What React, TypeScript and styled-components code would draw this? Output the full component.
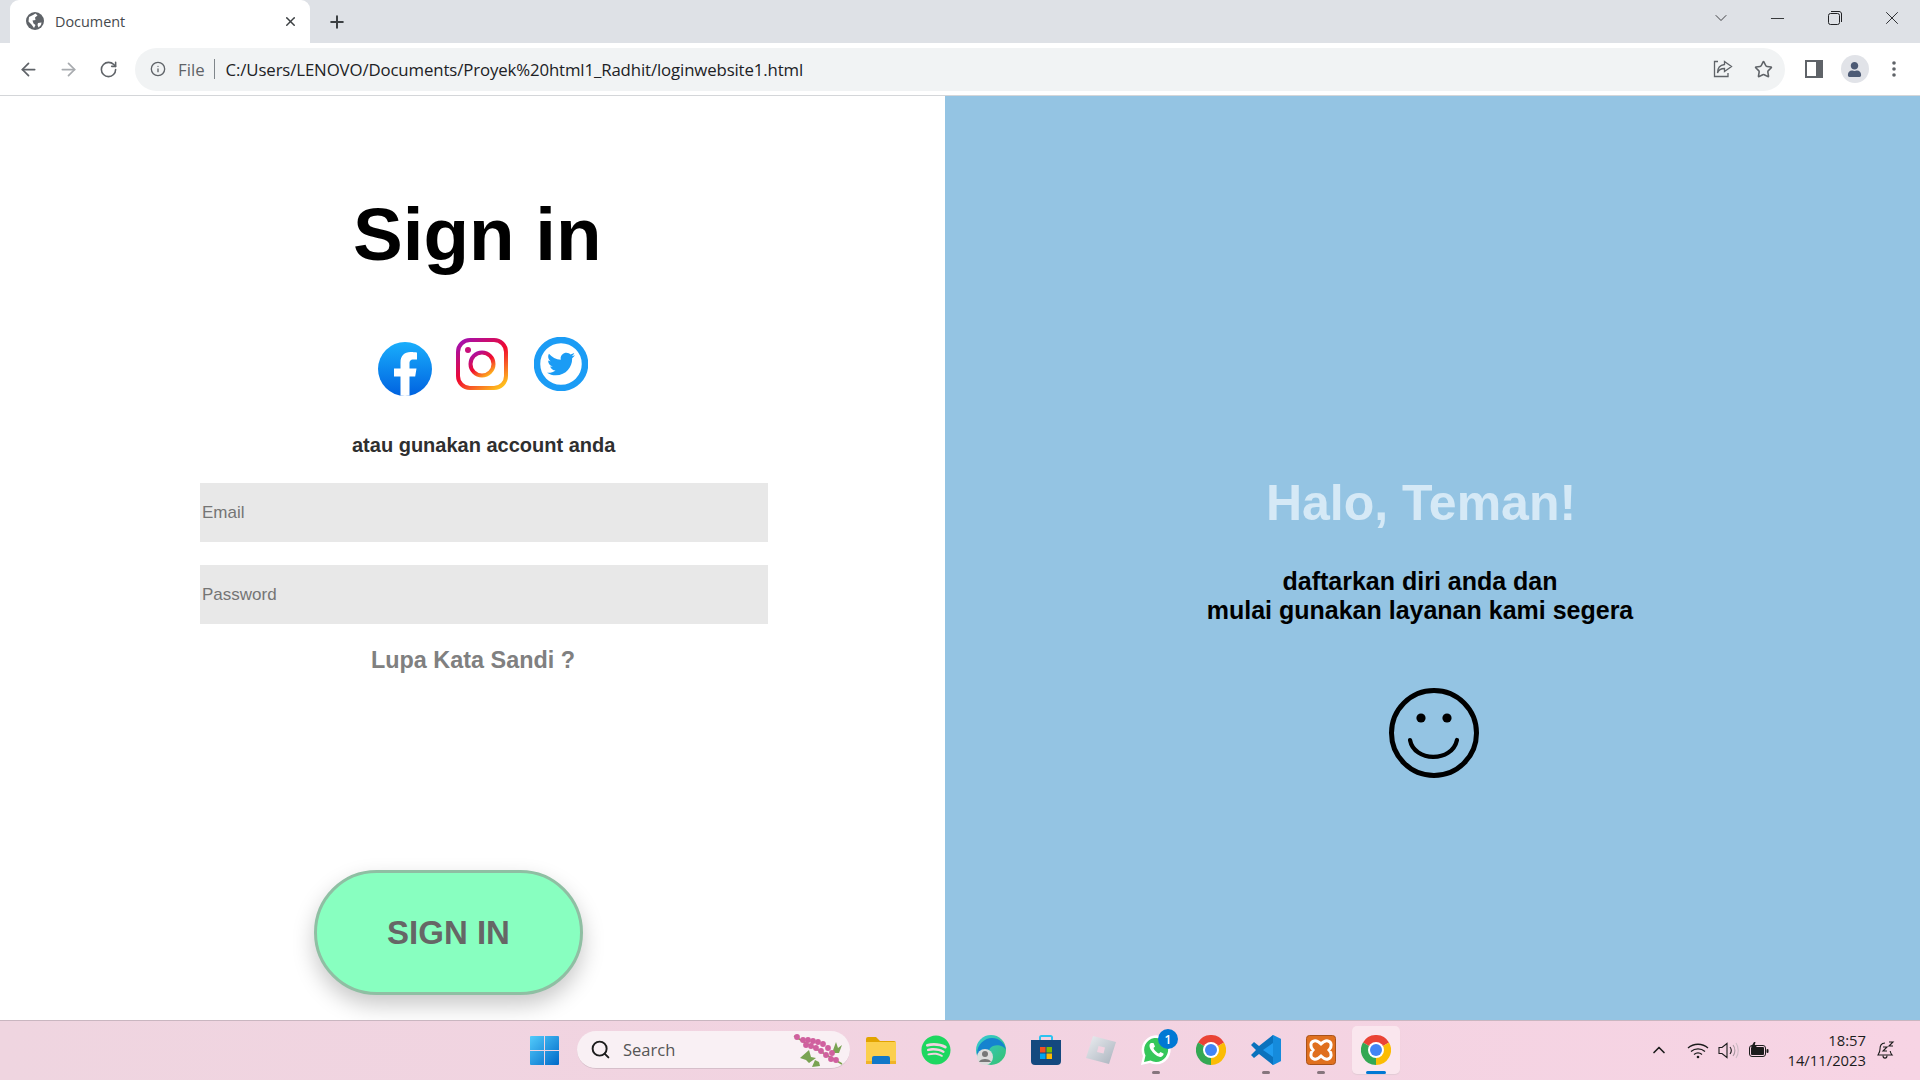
import React from "react";
import styled, { createGlobalStyle } from "styled-components";
import { ArrowLeft, ArrowRight, RotateCw, Info, Star, X, Plus, ChevronDown, ChevronUp, Minus, Search } from "lucide-react";
import { FaSpotify, FaTwitter, FaUser } from "react-icons/fa";

const GlobalStyle = createGlobalStyle`
    html, body {
        margin: 0;
        width: 1920px;
        height: 1080px;
        overflow: hidden;
        background: #fff;
        font-family: "Liberation Sans", Arial, sans-serif;
    }
    * { box-sizing: border-box; }
`;

const Screen = styled.div`
    width: 1920px;
    height: 1080px;
    display: flex;
    flex-direction: column;
`;

/* browser chrome */
const TabStrip = styled.div`
    height: 43px;
    background: #dee1e6;
    display: flex;
    align-items: flex-end;
    padding-left: 10px;
    color: #3c4043;
`;
const Tab = styled.div`
    width: 300px;
    height: 43px;
    background: #fff;
    border-radius: 9px 9px 0 0;
    display: flex;
    align-items: center;
    padding: 0 12px 1px 16px;
    font-family: "Open Sans", sans-serif;
    font-size: 14.4px;
    color: #45494d;
`;
const TabTitle = styled.span`
    margin-left: 11px;
    flex: 1;
`;
const NewTab = styled.div`
    margin: 0 0 11px 17px;
    display: flex;
    height: 20px;
`;
const WindowButtons = styled.div`
    margin-left: auto;
    align-self: flex-start;
    display: flex;
    color: #202124;
`;
const WindowButton = styled.div`
    width: 57px;
    height: 36px;
    display: flex;
    align-items: center;
    justify-content: center;
`;
const Toolbar = styled.div`
    height: 53px;
    background: #fff;
    border-bottom: 1px solid #d4d6d9;
    display: flex;
    align-items: center;
    padding: 0 7px 0 8px;
    color: #5f6368;
`;
const NavButton = styled.div<{ $w?: number; $dim?: boolean }>`
    width: ${(p) => p.$w ?? 40}px;
    flex: none;
    display: flex;
    justify-content: center;
    color: ${(p) => (p.$dim ? "#a8abaf" : "#5f6368")};
`;
const Omnibox = styled.div`
    width: 1650px;
    flex: none;
    height: 43px;
    margin: 0 8px 0 7px;
    background: #f1f3f4;
    border-radius: 22px;
    display: flex;
    align-items: center;
    padding: 0 2px 0 15px;
    font-family: "Open Sans", sans-serif;
    font-size: 16.8px;
`;
const FileLabel = styled.span`
    color: #5f6368;
    margin-left: 12px;
`;
const Divider = styled.span`
    width: 1px;
    height: 20px;
    background: #80868b;
    margin: 0 11px 0 9px;
`;
const Url = styled.span`
    color: #202124;
    flex: 1;
    white-space: nowrap;
    letter-spacing: -0.12px;
`;
const OmniIcon = styled.div`
    width: 40px;
    display: flex;
    justify-content: center;
`;
const Avatar = styled.div`
    width: 28px;
    height: 28px;
    border-radius: 50%;
    background: #e1e3e8;
    color: #4d5b75;
    display: flex;
    align-items: center;
    justify-content: center;
`;

/* page */
const Page = styled.main`
    height: 924px;
    display: flex;
`;
const LeftPanel = styled.section`
    width: 945px;
    background: #fff;
    display: flex;
    flex-direction: column;
    padding-top: 96px;
`;
const Title = styled.h1`
    margin: 0 0 0 353px;
    font-size: 74.6px;
    line-height: 85px;
    font-weight: 700;
    color: #000;
    white-space: nowrap;
`;
const SocialRow = styled.div`
    display: flex;
    align-items: flex-start;
    margin: 60px 0 0 378px;
    height: 58px;
`;
const SocialIcon = styled.a<{ $top: number; $right: number }>`
    display: block;
    margin-top: ${(p) => p.$top}px;
    margin-right: ${(p) => p.$right}px;
    line-height: 0;
`;
const Hint = styled.p`
    margin: 39px 0 0 352px;
    font-size: 20px;
    line-height: 23px;
    font-weight: 700;
    color: #2f2f2f;
    white-space: nowrap;
`;
const Field = styled.input`
    display: block;
    width: 568px;
    height: 59px;
    margin: 0 0 0 200px;
    padding: 0 2px;
    border: none;
    outline: none;
    background: #e8e8e8;
    font-family: "Liberation Sans", Arial, sans-serif;
    font-size: 17px;
    &::placeholder { color: #757575; opacity: 1; }
`;
const EmailField = styled(Field)`
    margin-top: 26px;
`;
const PasswordField = styled(Field)`
    margin-top: 23px;
`;
const Forgot = styled.a`
    margin: 23px 0 0 371px;
    font-size: 23.4px;
    line-height: 27px;
    font-weight: 700;
    color: #808080;
    white-space: nowrap;
`;
const SignInButton = styled.button`
    width: 269px;
    height: 125px;
    margin: 196px 0 0 314px;
    border: 3px solid #8fbfa3;
    border-radius: 63px;
    background: #88ffc0;
    box-shadow: 0 10px 22px rgba(0, 0, 0, 0.22);
    font-family: "Liberation Sans", Arial, sans-serif;
    font-size: 33px;
    font-weight: 700;
    color: #666;
`;
const RightPanel = styled.section`
    flex: 1;
    background: #94c4e3;
    display: flex;
    flex-direction: column;
    align-items: center;
    padding-top: 377px;
`;
const Hello = styled.h2`
    margin: 0 23px 0 0;
    font-size: 50px;
    line-height: 60px;
    font-weight: 700;
    color: #d5e9f6;
`;
const Lead = styled.p`
    margin: 34px 25px 0 0;
    font-size: 25px;
    line-height: 29px;
    font-weight: 700;
    text-align: center;
    color: #000;
`;
const SmileWrap = styled.div`
    margin: 63px 0 0 2px;
    line-height: 0;
`;

/* taskbar */
const Taskbar = styled.footer`
    height: 60px;
    border-top: 1px solid #c9b6c0;
    background: linear-gradient(90deg, #efd5e0, #f2d3e1 50%, #f7d4e4);
    display: flex;
    align-items: center;
    padding: 0 0 1px 530px;
`;
const StartIcon = styled.div`
    line-height: 0;
    margin-right: 18px;
`;
const SearchPill = styled.div`
    width: 273px;
    height: 38px;
    border-radius: 19px;
    background: #f9f0f4;
    border-bottom: 1px solid #d6bfca;
    display: flex;
    align-items: center;
    padding: 0 6px 0 13px;
    color: #1c1c1c;
    font-family: "Open Sans", sans-serif;
    font-size: 16.5px;
`;
const SearchLabel = styled.span`
    margin-left: 12px;
    flex: 1;
    color: #555;
`;
const AppButton = styled.div<{ $active?: boolean; $dot?: boolean }>`
    position: relative;
    width: 48px;
    height: 48px;
    margin-left: 7px;
    border-radius: 5px;
    display: flex;
    align-items: center;
    justify-content: center;
    background: ${(p) => (p.$active ? "#fae6ee" : "transparent")};
    box-shadow: ${(p) => (p.$active ? "0 1px 1px #e3cbd6" : "none")};
    &::after {
        content: ${(p) => (p.$active || p.$dot ? '""' : "none")};
        position: absolute;
        bottom: 0;
        left: 50%;
        transform: translateX(-50%);
        width: ${(p) => (p.$active ? 20 : 8)}px;
        height: 3px;
        border-radius: 2px;
        background: ${(p) => (p.$active ? "#0078d4" : "#86757d")};
    }
`;
const Badge = styled.span`
    position: absolute;
    top: 3px;
    right: 2px;
    width: 20px;
    height: 20px;
    border-radius: 50%;
    background: #0078d4;
    color: #fff;
    font-family: "Open Sans", sans-serif;
    font-size: 12px;
    font-weight: 600;
    display: flex;
    align-items: center;
    justify-content: center;
`;
const Tray = styled.div`
    margin-left: auto;
    display: flex;
    align-items: center;
    padding-right: 24px;
    color: #1c1c1c;
`;
const TrayIcon = styled.div<{ $w: number }>`
    width: ${(p) => p.$w}px;
    display: flex;
    justify-content: center;
    line-height: 0;
`;
const Clock = styled.div`
    margin-left: 10px;
    margin-right: 10px;
    text-align: right;
    font-family: "Open Sans", sans-serif;
    font-size: 14.8px;
    line-height: 20px;
    color: #1c1c1c;
`;

const FaviconGlobe = () => (
    <svg width="18" height="18" viewBox="0 0 18 18">
        <circle cx="9" cy="9" r="9" fill="#5f6368" />
        <path d="M3 5L7 3L9.5 1.5L11.5 3.5L9 5.5L9.5 8L6.5 8.5L7.5 11.5L9.5 13L8 16L5.5 12.5L2.5 9.5ZM12 11L15.5 10.5L15 13L12.5 15.5L11.5 13Z" fill="#fff" />
    </svg>
);

const ChromeLogo = () => (
    <svg width="30" height="30" viewBox="0 0 30 30">
        <path d="M15 15 L2 7.5 A15 15 0 0 1 28 7.5 Z" fill="#ea4335" />
        <path d="M15 15 L28 7.5 A15 15 0 0 1 15 30 Z" fill="#fbbc04" />
        <path d="M15 15 L15 30 A15 15 0 0 1 2 7.5 Z" fill="#34a853" />
        <circle cx="15" cy="15" r="8" fill="#fff" />
        <circle cx="15" cy="15" r="6" fill="#4285f4" />
    </svg>
);

const FacebookIcon = () => (
    <svg width="54" height="54" viewBox="0 0 54 54">
        <defs>
            <linearGradient id="fb" x1="0" y1="0" x2="0" y2="1">
                <stop offset="0" stopColor="#19aefc" />
                <stop offset="1" stopColor="#0062e0" />
            </linearGradient>
            <clipPath id="fbc"><circle cx="27" cy="27" r="27" /></clipPath>
        </defs>
        <circle cx="27" cy="27" r="27" fill="url(#fb)" />
        <path clipPath="url(#fbc)" d="M22.5 54V34.5H16V26.5H22.5V20.5C22.5 13.8 26.4 10 32.5 10C35 10 39 10.5 39 10.5V17.5H35.5C32.2 17.5 31.5 19.4 31.5 21.4V26.5H38.5L37.2 34.5H31.5V54Z" fill="#fff" />
    </svg>
);

const InstagramIcon = () => (
    <svg width="52" height="52" viewBox="0 0 52 52">
        <defs>
            <linearGradient id="ig" x1="0.15" y1="0" x2="0.85" y2="1">
                <stop offset="0" stopColor="#a80fa8" />
                <stop offset="0.5" stopColor="#f10a2e" />
                <stop offset="1" stopColor="#ffbd1c" />
            </linearGradient>
        </defs>
        <rect x="2" y="2" width="48" height="48" rx="12" fill="#fff" stroke="url(#ig)" strokeWidth="4" />
        <circle cx="26" cy="26" r="11.5" fill="none" stroke="url(#ig)" strokeWidth="4" />
        <circle cx="12" cy="12" r="3" fill="#c80f7a" />
    </svg>
);

const TwitterIcon = () => (
    <svg width="54" height="54" viewBox="0 0 54 54">
        <circle cx="27" cy="27" r="24" fill="#fff" stroke="#1b9cf5" strokeWidth="6.5" />
        <FaTwitter x="13" y="13" size="28" color="#1b9cf5" />
    </svg>
);

const Smiley = () => (
    <svg width="90" height="90" viewBox="0 0 90 90" fill="none" stroke="#000">
        <circle cx="45" cy="45" r="42.5" strokeWidth="5" />
        <circle cx="32" cy="30" r="4.6" fill="#000" stroke="none" />
        <circle cx="58" cy="30" r="4.6" fill="#000" stroke="none" />
        <path d="M21 52C25 74 63 75 68 52" strokeWidth="4.2" strokeLinecap="round" />
    </svg>
);

const ShareIcon = () => (
    <svg width="20" height="18" viewBox="0 0 20 18" fill="none" stroke="#5f6368" strokeWidth="1.3">
        <path d="M5 1.5H1.5V16.5H15V13" />
        <path d="M11.5 1.5L18.5 6.5L11.5 11.5V8.5C8 8.5 5.5 10 4.5 13C4.5 8 7.5 5 11.5 4.5Z" />
    </svg>
);

const SidePanelIcon = () => (
    <svg width="18" height="18" viewBox="0 0 18 18">
        <path fillRule="evenodd" d="M0 0H18V18H0ZM2 2V16H11V2Z" fill="#5f6368" />
    </svg>
);

const DotsIcon = () => (
    <svg width="4" height="16" viewBox="0 0 4 16" fill="#5f6368">
        <circle cx="2" cy="2" r="1.8" />
        <circle cx="2" cy="8" r="1.8" />
        <circle cx="2" cy="14" r="1.8" />
    </svg>
);

const RestoreIcon = () => (
    <svg width="14" height="14" viewBox="0 0 14 14" fill="none" stroke="#202124" strokeWidth="1">
        <rect x="0.5" y="2.5" width="11" height="11" rx="2" />
        <path d="M3 0.5H11C12.5 0.5 13.5 1.5 13.5 3V11" />
    </svg>
);

const WindowsLogo = () => (
    <svg width="29" height="29" viewBox="0 0 29 29">
        <defs>
            <linearGradient id="win" x1="0" y1="0" x2="1" y2="1">
                <stop offset="0" stopColor="#52cbfb" />
                <stop offset="1" stopColor="#0069c8" />
            </linearGradient>
        </defs>
        <path d="M0 1A1 1 0 0 1 1 0H14V14H0ZM15 0H28A1 1 0 0 1 29 1V14H15ZM0 15H14V29H1A1 1 0 0 1 0 28ZM15 15H29V28A1 1 0 0 1 28 29H15Z" fill="url(#win)" />
    </svg>
);

const Flower = () => (
    <svg width="52" height="34" viewBox="0 0 52 34">
        <path d="M2 3L50 31" stroke="#7fa350" strokeWidth="1.5" />
        <path d="M40 20l4-11 2 6 4-3-3 8zM8 25l9-8 2 7 5 1-7 5-3-3zM20 34l3-7 4 2 1 4z" fill="#79a352" />
        {[[5, 4], [11, 7], [16, 7], [21, 8], [14, 12], [19, 13], [26, 9], [24, 15], [31, 11], [29, 18], [36, 15], [34, 22], [40, 20], [39, 26], [44, 27]].map(([x, y]) => (
            <circle key={`${x}-${y}`} cx={x} cy={y} r="2.9" fill="#d0609f" />
        ))}
    </svg>
);

const FolderIcon = () => (
    <svg width="30" height="27" viewBox="0 0 30 27">
        <path d="M0 2A2 2 0 0 1 2 0H10L14 4H28A2 2 0 0 1 30 6V10H0Z" fill="#e2a400" />
        <path d="M0 5H30V27H0Z" fill="#fbcf4d" />
        <path d="M0 24H30V27H0Z" fill="#f0b429" />
        <path d="M6 21A2 2 0 0 1 8 19H22A2 2 0 0 1 24 21V27H6Z" fill="#1278c8" />
    </svg>
);

const EdgeIcon = () => (
    <svg width="30" height="30" viewBox="0 0 30 30">
        <defs>
            <linearGradient id="edgeA" x1="0" y1="0" x2="1" y2="1">
                <stop offset="0" stopColor="#37c9d8" />
                <stop offset="1" stopColor="#35c26e" />
            </linearGradient>
        </defs>
        <circle cx="15" cy="15" r="15" fill="url(#edgeA)" />
        <path d="M1 19C1 9 9 3 16 3C24 3 29 9 30 15C28 11 22 9 17 11C12 13 11 20 14 24C9 24 3 23 1 19Z" fill="#1583cf" />
        <circle cx="9" cy="22" r="8" fill="#dcdcdc" />
        <circle cx="9" cy="19" r="3" fill="#777" />
        <path d="M3 27C4 23 14 23 15 27Z" fill="#777" />
    </svg>
);

const StoreIcon = () => (
    <svg width="30" height="30" viewBox="0 0 30 30">
        <path d="M9 5V2A1.5 1.5 0 0 1 10.5 1H19.5A1.5 1.5 0 0 1 21 2V5" fill="none" stroke="#2dc3f0" strokeWidth="2" />
        <path d="M0 5H30V26A4 4 0 0 1 26 30H4A4 4 0 0 1 0 26Z" fill="#14497f" />
        <rect x="9" y="12" width="5.5" height="5.5" fill="#f25022" />
        <rect x="15.5" y="12" width="5.5" height="5.5" fill="#7fba00" />
        <rect x="9" y="18.5" width="5.5" height="5.5" fill="#00a4ef" />
        <rect x="15.5" y="18.5" width="5.5" height="5.5" fill="#ffb900" />
    </svg>
);

const RobloxIcon = () => (
    <svg width="30" height="30" viewBox="0 0 30 30">
        <defs>
            <linearGradient id="rb" x1="0" y1="0" x2="1" y2="1">
                <stop offset="0" stopColor="#eceef1" />
                <stop offset="1" stopColor="#a9b2bd" />
            </linearGradient>
        </defs>
        <path fillRule="evenodd" d="M7 1L30 7L23 29L0 23ZM12.5 11L11 17L17.5 18.5L19 12.5Z" fill="url(#rb)" />
    </svg>
);

const WhatsappIcon = () => (
    <svg width="30" height="30" viewBox="0 0 30 30">
        <path d="M0 30L2 21A14.5 14.5 0 1 1 9 28Z" fill="#fff" />
        <path d="M3 27L4.5 20.5A12 12 0 1 1 9.5 25.5Z" fill="#35c75a" />
        <path d="M10 8C8 9 8 12 10 15C12 18 15 21 19 22C21 22 23 20 22.5 18.5L19.5 17L18 18.5C16 18 13 15 12.5 13L14 11.5L12.5 8Z" fill="#fff" />
    </svg>
);

const VsCodeIcon = () => (
    <svg width="30" height="30" viewBox="0 0 30 30">
        <path d="M22 0L30 4V26L22 30L8 16Z" fill="#1f9cf0" />
        <path d="M22 0L22 30L30 26V4Z" fill="#0f80cf" opacity="0.6" />
        <path d="M22 8L12 15L22 22V30L8 19L3 23L0 20L5 15L0 10L3 7L8 11L22 0Z" fill="#0a72bd" />
    </svg>
);

const XamppIcon = () => (
    <svg width="30" height="30" viewBox="0 0 30 30">
        <rect x="0.5" y="0.5" width="29" height="29" rx="3" fill="#e0701f" stroke="#a9521a" />
        <path d="M8 6C11 5 13 7 15 9C17 7 19 5 22 6C26 7 26 12 23 15C26 18 26 23 22 24C19 25 17 23 15 21C13 23 11 25 8 24C4 23 4 18 7 15C4 12 4 7 8 6Z" fill="none" stroke="#fff" strokeWidth="3" />
    </svg>
);

const WifiIcon = () => (
    <svg width="22" height="17" viewBox="0 0 22 17" fill="none" stroke="#1c1c1c" strokeWidth="1.3">
        <path d="M1 6C6.5 1 15.5 1 21 6" />
        <path d="M4 9.5C8 6 14 6 18 9.5" />
        <path d="M7 12.5C9.5 10.5 12.5 10.5 15 12.5" />
        <circle cx="11" cy="15" r="1.3" fill="#1c1c1c" stroke="none" />
    </svg>
);

const VolumeIcon = () => (
    <svg width="21" height="17" viewBox="0 0 21 17" fill="none" stroke="#1c1c1c" strokeWidth="1.1">
        <path d="M1 5.5H4L9 1.5V15.5L4 11.5H1Z" />
        <path d="M12 5C13.5 7 13.5 10 12 12" />
        <path d="M15 3C17.5 6 17.5 11 15 14" stroke="#a89aa1" />
        <path d="M18 1C21 5 21 12 18 16" stroke="#cdbcc5" />
    </svg>
);

const BatteryIcon = () => (
    <svg width="20" height="16" viewBox="0 0 20 16">
        <rect x="0.5" y="3.5" width="16" height="11" rx="2.5" fill="none" stroke="#1c1c1c" />
        <rect x="2" y="5" width="13" height="8" rx="1" fill="#1c1c1c" />
        <rect x="17.5" y="7" width="2" height="4" rx="1" fill="#1c1c1c" />
        <path d="M5 0L2 5H5L3.5 8L8 4H5.5L6.5 0Z" fill="#1c1c1c" />
    </svg>
);

const BellIcon = () => (
    <svg width="18" height="20" viewBox="0 0 18 20" fill="none" stroke="#1c1c1c" strokeWidth="1.1">
        <path d="M8 3C4 3 3 6 3 9C3 12 2 13 1 15H15C14 14 13.5 13 13.2 11" />
        <path d="M6 15.5C6 19 10 19 10 15.5" />
        <path d="M6 7H10L6 11H10" />
        <path d="M12 2H16L12 6H16" />
    </svg>
);

export default function App() {
    return (
        <Screen>
            <GlobalStyle />
            <TabStrip>
                <Tab>
                    <FaviconGlobe />
                    <TabTitle>Document</TabTitle>
                    <X size={15} color="#3c4043" strokeWidth={2.4} />
                </Tab>
                <NewTab>
                    <Plus size={20} color="#3c4043" strokeWidth={2.4} />
                </NewTab>
                <WindowButtons>
                    <WindowButton><ChevronDown size={20} strokeWidth={1} /></WindowButton>
                    <WindowButton><Minus size={21} strokeWidth={1} /></WindowButton>
                    <WindowButton><RestoreIcon /></WindowButton>
                    <WindowButton><X size={22} strokeWidth={1} /></WindowButton>
                </WindowButtons>
            </TabStrip>
            <Toolbar>
                <NavButton><ArrowLeft size={21} strokeWidth={2} /></NavButton>
                <NavButton $dim><ArrowRight size={21} strokeWidth={2} /></NavButton>
                <NavButton><RotateCw size={19} strokeWidth={2} /></NavButton>
                <Omnibox>
                    <Info size={16} strokeWidth={2} color="#5f6368" />
                    <FileLabel>File</FileLabel>
                    <Divider />
                    <Url>C:/Users/LENOVO/Documents/Proyek%20html1_Radhit/loginwebsite1.html</Url>
                    <OmniIcon><ShareIcon /></OmniIcon>
                    <OmniIcon><Star size={19} strokeWidth={2} color="#5f6368" /></OmniIcon>
                </Omnibox>
                <NavButton $w={41}><SidePanelIcon /></NavButton>
                <NavButton $w={41}><Avatar><FaUser size={15} /></Avatar></NavButton>
                <NavButton $w={38}><DotsIcon /></NavButton>
            </Toolbar>
            <Page>
                <LeftPanel>
                    <Title>Sign in</Title>
                    <SocialRow>
                        <SocialIcon $top={5} $right={24}><FacebookIcon /></SocialIcon>
                        <SocialIcon $top={1} $right={26}><InstagramIcon /></SocialIcon>
                        <SocialIcon $top={0} $right={0}><TwitterIcon /></SocialIcon>
                    </SocialRow>
                    <Hint>atau gunakan account anda</Hint>
                    <EmailField type="email" placeholder="Email" />
                    <PasswordField type="password" placeholder="Password" />
                    <Forgot>Lupa Kata Sandi ?</Forgot>
                    <SignInButton>SIGN IN</SignInButton>
                </LeftPanel>
                <RightPanel>
                    <Hello>Halo, Teman!</Hello>
                    <Lead>
                        daftarkan diri anda dan
                        <br />
                        mulai gunakan layanan kami segera
                    </Lead>
                    <SmileWrap><Smiley /></SmileWrap>
                </RightPanel>
            </Page>
            <Taskbar>
                <StartIcon><WindowsLogo /></StartIcon>
                <SearchPill>
                    <Search size={21} strokeWidth={2.2} />
                    <SearchLabel>Search</SearchLabel>
                    <Flower />
                </SearchPill>
                <AppButton><FolderIcon /></AppButton>
                <AppButton><FaSpotify size={30} color="#1ed760" /></AppButton>
                <AppButton><EdgeIcon /></AppButton>
                <AppButton><StoreIcon /></AppButton>
                <AppButton><RobloxIcon /></AppButton>
                <AppButton $dot><WhatsappIcon /><Badge>1</Badge></AppButton>
                <AppButton><ChromeLogo /></AppButton>
                <AppButton $dot><VsCodeIcon /></AppButton>
                <AppButton $dot><XamppIcon /></AppButton>
                <AppButton $active><ChromeLogo /></AppButton>
                <Tray>
                    <TrayIcon $w={44}><ChevronUp size={20} strokeWidth={2} /></TrayIcon>
                    <TrayIcon $w={34}><WifiIcon /></TrayIcon>
                    <TrayIcon $w={26}><VolumeIcon /></TrayIcon>
                    <TrayIcon $w={36}><BatteryIcon /></TrayIcon>
                    <Clock>18:57<br />14/11/2023</Clock>
                    <TrayIcon $w={20}><BellIcon /></TrayIcon>
                </Tray>
            </Taskbar>
        </Screen>
    );
}
